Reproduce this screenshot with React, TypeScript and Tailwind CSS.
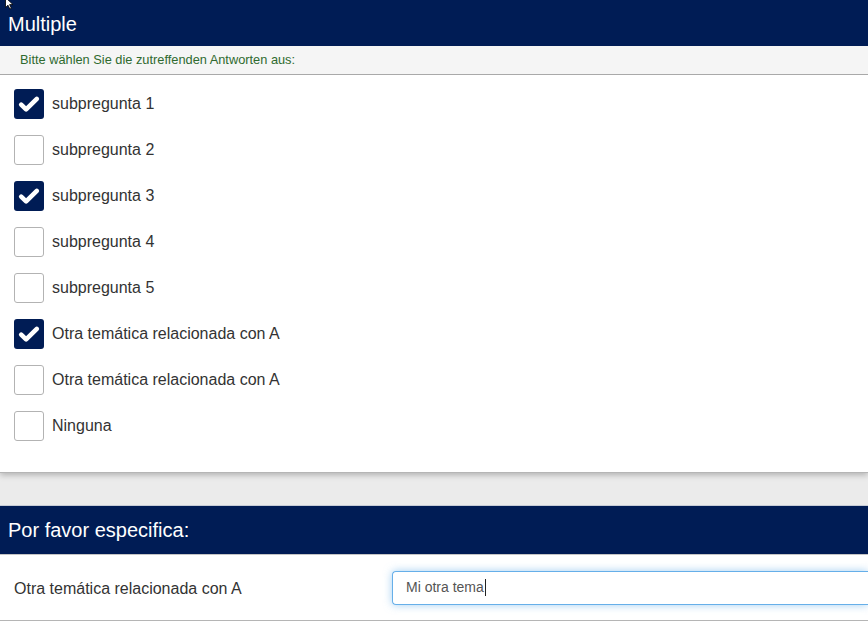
import React from 'react';

interface Option {
  id: number;
  label: string;
  checked: boolean;
}

const options: Option[] = [
  { id: 1, label: 'subpregunta 1', checked: true },
  { id: 2, label: 'subpregunta 2', checked: false },
  { id: 3, label: 'subpregunta 3', checked: true },
  { id: 4, label: 'subpregunta 4', checked: false },
  { id: 5, label: 'subpregunta 5', checked: false },
  { id: 6, label: 'Otra temática relacionada con A', checked: true },
  { id: 7, label: 'Otra temática relacionada con A', checked: false },
  { id: 8, label: 'Ninguna', checked: false },
];

const CheckBox: React.FC<{ checked: boolean }> = ({ checked }) =>
  checked ? (
    <span className="flex h-[30px] w-[30px] shrink-0 items-center justify-center rounded-[3px] bg-[#001c55]">
      <svg viewBox="0 0 24 24" className="h-[24px] w-[24px]">
        <path d="M4.2 12.6l4.9 4.8L19.8 6.9" fill="none" stroke="#fff" strokeWidth={4.6} strokeLinecap="round" strokeLinejoin="round" />
      </svg>
    </span>
  ) : (
    <span className="h-[30px] w-[30px] shrink-0 rounded-[3px] border border-[#b3b3b3] bg-white" />
  );

const App: React.FC = () => {
  return (
    <div className="relative min-h-[621px] bg-[#ebebeb] font-['Liberation_Sans',Arial,sans-serif]">
      {/* pointer left on the page */}
      <svg className="absolute left-[5px] top-[-3px]" width="10" height="13" viewBox="0 0 10 13">
        <path d="M0.5 0.5v10l2.5-2.3 1.8 3.8 1.6-0.7-1.8-3.7h3.4z" fill="#fff" stroke="#000" strokeWidth="0.8" />
      </svg>

      <section className="border-b border-[#b5b5b5] bg-white shadow-[0_2px_6px_rgba(0,0,0,0.25)]">
        <h2 className="flex h-[46px] items-center bg-[#001c55] px-2 pt-0.5 text-[20px] leading-none text-white">Multiple</h2>
        <div className="flex h-[29px] items-center border-b border-[#a9a9a9] bg-[#f5f5f5] px-5 text-[12.8px] text-[#2f6a2f]">
          Bitte wählen Sie die zutreffenden Antworten aus:
        </div>
        <ul className="pb-[23px] pt-[6px]">
          {options.map((o) => (
            <li key={o.id} className="flex h-[46px] items-center gap-2 px-[14px] text-[16px] text-[#333]">
              <CheckBox checked={o.checked} />
              <span>{o.label}</span>
            </li>
          ))}
        </ul>
      </section>

      <section className="mt-[32px] border-b border-[#b5b5b5] bg-white">
        <h2 className="flex h-[49px] items-center border-t border-[#c7ccd6] bg-[#001c55] px-2 text-[20px] leading-none text-white">
          Por favor especifica:
        </h2>
        <div className="flex h-[66px] items-center border-t border-[#c4c4c4]">
          <label className="w-[392px] shrink-0 pl-[14px] pt-0.5 text-[16px] text-[#333]">Otra temática relacionada con A</label>
          <div className="flex h-[34px] flex-1 items-center rounded-l-[4px] border border-r-0 border-[#66afe9] pl-[13px] text-[14px] text-[#555] shadow-[0_0_8px_rgba(102,175,233,0.6)]">
            Mi otra tema
            <span className="ml-px h-[17px] w-px bg-[#222]" />
          </div>
        </div>
      </section>
    </div>
  );
};

export default App;
